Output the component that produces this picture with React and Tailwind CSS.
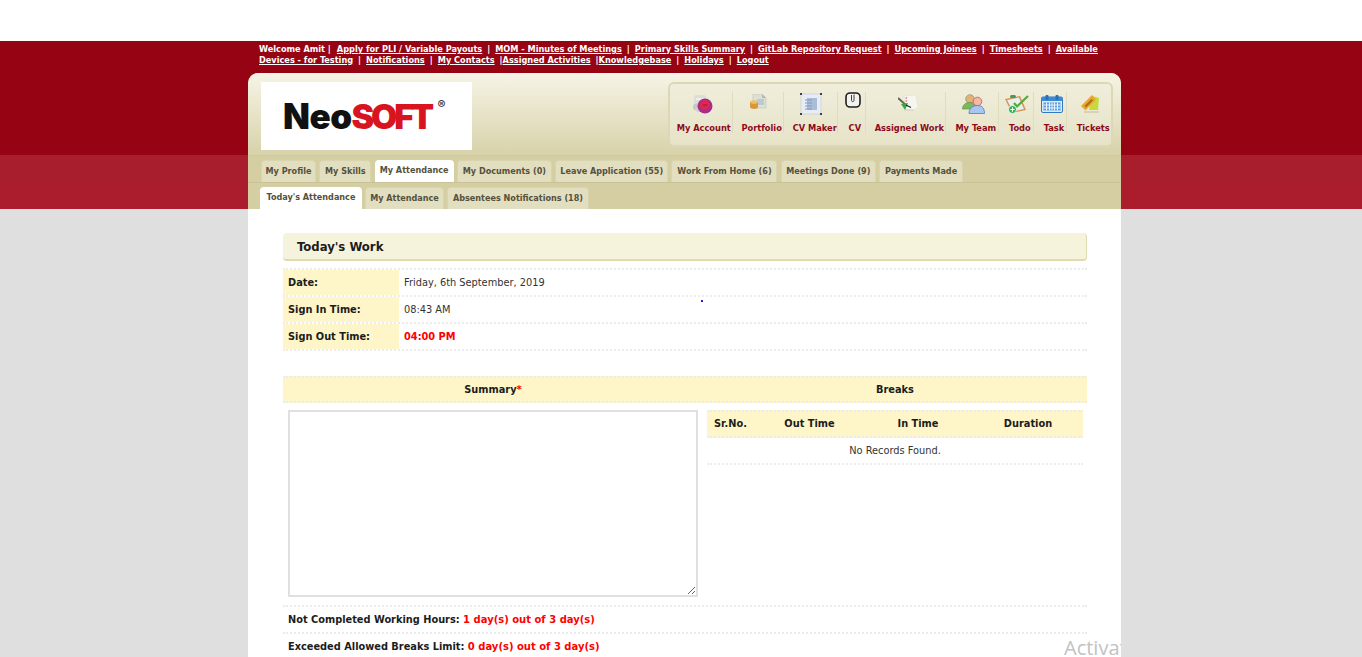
import React from 'react'

const sans = "font-['DejaVu_Sans',Verdana,sans-serif]"
const cond = "font-['DejaVu_Sans_Condensed','DejaVu_Sans',sans-serif]"

const IconAccount = () => (
  <svg className="ml-[4px] blur-[0.4px]" width="20" height="19" viewBox="0 0 20 19">
    <rect x="1" y="0" width="12" height="14" rx="2" fill="#deded8" />
    <rect x="3" y="3" width="8" height="2" fill="#efefe8" />
    <circle cx="3.500" cy="12" r="3.500" fill="#c8c8c2" />
    <path d="M2 13h8v4H4z" fill="#d2d2cc" />
    <circle cx="12" cy="11" r="7.500" fill="#a62d8c" />
    <circle cx="12" cy="10" r="5" fill="#dc2850" />
    <path d="M10 10h4" stroke="#9a1438" strokeWidth="1" />
  </svg>
)
const IconPortfolio = () => (
  <svg className="mb-[6px] blur-[0.4px]" width="17" height="15" viewBox="0 0 17 15">
    <path d="M3 0h9l4 4v10H3z" fill="#dde0d4" stroke="#bcc0ae" strokeWidth="0.600" />
    <path d="M12 0v4h4z" fill="#b6baa8" />
    <rect x="7" y="5" width="7" height="6" fill="#bccad0" />
    <path d="M0 8h8v5c0 1-2 2-4 2s-4-1-4-2z" fill="#d8983a" />
    <ellipse cx="4" cy="8" rx="4" ry="1.800" fill="#efbe66" />
  </svg>
)
const IconCvMaker = () => (
  <svg className="blur-[0.3px]" width="22" height="22" viewBox="0 0 22 22">
    <rect x="1" y="1" width="20" height="20" fill="#e8ecf4" stroke="#c4c8d0" strokeWidth="0.600" />
    <rect x="7" y="5" width="10" height="12" fill="#a9bdd6" />
    <path d="M5 7h7M5 10h7M5 13h7M5 16h7" stroke="#7d9ac0" strokeWidth="1" />
    <path d="M0 0h2v2H0zM20 0h2v2h-2zM0 20h2v2H0zM20 20h2v2h-2z" fill="#3a3f4c" />
  </svg>
)
const IconCv = () => (
  <svg className="ml-[2px] mb-[8px] blur-[0.3px]" width="16" height="16" viewBox="0 0 16 16">
    <rect x="1" y="1" width="14" height="14" rx="4" fill="#f2f2ee" stroke="#1e1e1e" strokeWidth="1.600" />
    <path d="M6.500 3v5.500c0 1.500 2.500 1.500 2.500 0V2.500" fill="none" stroke="#444" strokeWidth="1" />
  </svg>
)
const IconAssigned = () => (
  <svg className="ml-[6px] blur-[0.3px]" width="20" height="18" viewBox="0 0 20 18">
    <path d="M6 1l12-1 2 12-5 4-8-2z" fill="#f6f6f0" stroke="#dcdcd2" strokeWidth="0.500" />
    <path d="M7.500 3h1.500M7.500 6h1.500" stroke="#d4443c" strokeWidth="1.200" />
    <path d="M0 3l9 8" stroke="#60624f" strokeWidth="1.800" />
    <path d="M3 9l7-1-3 7z" fill="#36a848" />
    <path d="M8 10l5 2.500" stroke="#222" strokeWidth="1.200" />
    <path d="M6 15h10" stroke="#cfcfb8" strokeWidth="1" />
  </svg>
)
const IconTeam = () => (
  <svg className="ml-[4px] blur-[0.3px]" width="23" height="20" viewBox="0 0 23 20">
    <circle cx="8" cy="5" r="4.300" fill="#e6b07a" stroke="#8aa45a" strokeWidth="0.800" />
    <path d="M0.500 15c0-4 3-6.500 7-6.500s6 2.500 6 6.500z" fill="#7cb85e" stroke="#5a8a40" strokeWidth="0.600" />
    <circle cx="15.500" cy="7.500" r="4.300" fill="#f2b8a8" stroke="#c85a50" strokeWidth="0.800" />
    <path d="M7 19.500c0-5 3.500-8 8.500-8s7 3 7 8z" fill="#a9c6ee" stroke="#4f7cc4" strokeWidth="0.800" />
  </svg>
)
const IconTodo = () => (
  <svg className="ml-[2px] blur-[0.3px]" width="24" height="19" viewBox="0 0 24 19">
    <path d="M0 4l15-3 6 14-14 3z" fill="#d98f58" />
    <path d="M2 5l12-2.500 5 11.500-11 2.500z" fill="#e6f0ec" />
    <rect x="5" y="0" width="6" height="3" rx="1.500" fill="#469a58" />
    <path d="M9 8l3 3.500L23 1" fill="none" stroke="#56a83a" strokeWidth="2.200" />
    <circle cx="7.500" cy="14.500" r="4" fill="#34a84a" stroke="#fff" strokeWidth="0.800" />
    <path d="M7.500 12.300v4.400M5.300 14.500h4.400" stroke="#fff" strokeWidth="1.200" />
  </svg>
)
const IconTask = () => (
  <svg className="ml-[4px] blur-[0.3px]" width="22" height="18" viewBox="0 0 22 18">
    <rect x="0.500" y="2" width="21" height="15.500" rx="1.500" fill="#dbeafa" stroke="#2f78c4" />
    <rect x="0.500" y="2" width="21" height="4" rx="1" fill="#3d8ad6" />
    <rect x="4.500" y="0" width="3" height="5" rx="1" fill="#2a70ba" />
    <rect x="14.500" y="0" width="3" height="5" rx="1" fill="#2a70ba" />
    <path d="M2.500 7.500h17v8h-17z" fill="#5b9fe0" />
    <path d="M5.500 7.500v8M8.500 7.500v8M11 7.500v8M13.500 7.500v8M16.500 7.500v8M2.500 10h17M2.500 13h17" stroke="#e8f2fb" strokeWidth="1" />
  </svg>
)
const IconTickets = () => (
  <svg className="ml-[2px] blur-[0.3px]" width="19" height="18" viewBox="0 0 19 18">
    <path d="M11 1l7 2-1 12H8z" fill="#c4da3e" />
    <path d="M0 11L11 0l4 4.500L4.500 15.500z" fill="#eda52c" />
    <path d="M3.500 11L10.500 4l1.500 1.500L5 12.500z" fill="#a8701a" />
    <path d="M3 17h15" stroke="#cfcba8" strokeWidth="1.500" />
  </svg>
)

const navItems = [
  { label: 'My Account', icon: <IconAccount />, w: 'w-[64px]', text: 'pl-[5px]' },
  { label: 'Portfolio', icon: <IconPortfolio />, w: 'w-[51px]', text: 'pl-[7px]' },
  { label: 'CV Maker', icon: <IconCvMaker />, w: 'w-[55px]', text: 'pl-[8px]' },
  { label: 'CV', icon: <IconCv />, w: 'w-[28px]', text: 'pl-[6px]' },
  { label: 'Assigned Work', icon: <IconAssigned />, w: 'w-[80px]', text: 'pl-[8px]' },
  { label: 'My Team', icon: <IconTeam />, w: 'w-[54px]', text: 'pl-[8px]' },
  { label: 'Todo', icon: <IconTodo />, w: 'w-[35px]', text: 'pl-[8px]' },
  { label: 'Task', icon: <IconTask />, w: 'w-[34px]', text: 'pl-[8px]' },
  { label: 'Tickets', icon: <IconTickets />, w: 'w-[44px]', text: 'pl-[8px]' },
]

const tabsTop = [
  ['My Profile', 'w-[55px]'],
  ['My Skills', 'w-[52px]'],
  ['My Attendance', 'w-[79px]', true],
  ['My Documents (0)', 'w-[95px]'],
  ['Leave Application (55)', 'w-[113px]'],
  ['Work From Home (6)', 'w-[106px]'],
  ['Meetings Done (9)', 'w-[95px]'],
  ['Payments Made', 'w-[84px]'],
]
const tabsSub = [
  ["Today's Attendance", 'w-[102px]', true],
  ['My Attendance', 'w-[79px]'],
  ['Absentees Notifications (18)', 'w-[142px]'],
]

function Tab({ label, w, active }) {
  return (
    <div className={`${w} h-[22px] flex items-center justify-center rounded-t-[4px] text-[9px] font-bold whitespace-nowrap text-[#55513c] ${cond} ${active ? 'bg-white' : 'bg-[#e2dec0] border border-b-0 border-[#d9d4ae]'}`}>
      {label}
    </div>
  )
}

function Sep() {
  return <span className="mx-[5px]">|</span>
}

function InfoRow({ label, children }) {
  return (
    <div className="flex h-[27px] border-b-2 border-dotted border-[#ececec]">
      <div className="w-[116px] pl-[5px] pt-[1px] flex items-center bg-[#fef6c8] font-bold text-[#1c1c1c]">{label}</div>
      <div className="pl-[5px] pt-[1px] flex items-center text-[#333]">{children}</div>
    </div>
  )
}

export default function App() {
  return (
    <div className={`h-screen overflow-hidden bg-[#dfdfdf] text-[9.8px] ${sans}`}>
      <div className="h-[41px] bg-white" />

      <div className="h-[168px] bg-[linear-gradient(to_bottom,#960413_0,#960413_114px,#a81e2c_114px,#a81e2c_141px,#ab1c2c_141px,#ab1c2c_168px)]">
        <div className="w-[873px] ml-[248px]">
          <div className={`h-[32px] pl-[11px] pt-[3px] w-[860px] text-white font-bold text-[9.1px] leading-[11px] ${cond}`}>
            Welcome Amit |<a className="underline ml-[6px]">Apply for PLI / Variable Payouts</a><Sep />
            <a className="underline">MOM - Minutes of Meetings</a><Sep />
            <a className="underline">Primary Skills Summary</a><Sep />
            <a className="underline">GitLab Repository Request</a><Sep />
            <a className="underline">Upcoming Joinees</a><Sep />
            <a className="underline">Timesheets</a><Sep />
            <a className="underline">Available Devices - for Testing</a><Sep />
            <a className="underline">Notifications</a><Sep />
            <a className="underline">My Contacts</a><span className="ml-[5px]">|</span>
            <a className="underline">Assigned Activities</a><span className="ml-[5px]">|</span>
            <a className="underline">Knowledgebase</a><Sep />
            <a className="underline">Holidays</a><Sep />
            <a className="underline">Logout</a>
          </div>

          <div className="h-[136px] rounded-t-[10px] overflow-hidden bg-[#d4cea2]">
            <div className="h-[82px] px-[13px] pt-[9px] flex justify-between bg-[linear-gradient(to_bottom,#f6f4e6,#d8d2aa)]">
              <div className="w-[211px] h-[68px] bg-white flex items-center pl-[22px] pt-[1px]">
                <div className="relative font-['Inter',sans-serif] font-black text-[35px] leading-none tracking-[-0.5px] text-[#111]">
                  Neo<span className="text-[34px] text-[#d7141f] tracking-[-3.2px]">SOFT</span>
                  <span className="absolute -right-[14px] top-[0px] text-[12px] font-bold text-[#3a3a3a]">®</span>
                </div>
              </div>
              <div className="w-[445px] h-[65px] -mr-[5px] rounded-[6px] border-2 border-[#dcd8b4] bg-[linear-gradient(to_bottom,#f0eedb,#e6e3c8)] flex items-start pt-[8px]">
                {navItems.map((item, i) => (
                  <div key={item.label} className={`${item.w} h-[41px] flex flex-col items-center justify-between ${i < navItems.length - 1 ? 'border-r border-[#e0dcc0]' : ''}`}>
                    <div className="h-[24px] flex items-center justify-center">{item.icon}</div>
                    <div className={`${item.text} text-[9.2px] font-bold whitespace-nowrap text-[#8c0a1a] leading-[11px] ${cond}`}>{item.label}</div>
                  </div>
                ))}
              </div>
            </div>
            <div className="h-[27px] pl-[13px] pt-[4px] flex gap-[3.3px] border-t border-[#cfc99e]">
              {tabsTop.map(([label, w, active]) => (
                <Tab key={label} label={label} w={w} active={active} />
              ))}
            </div>
            <div className="h-[27px] pl-[12px] pt-[4px] flex gap-[3px] border-t border-[#c8c296]">
              {tabsSub.map(([label, w, active]) => (
                <Tab key={label} label={label} w={w} active={active} />
              ))}
            </div>
          </div>
        </div>
      </div>

      <div className="relative w-[873px] ml-[248px] h-[448px] overflow-hidden bg-white pl-[35px] pr-[34px] pt-[24px]">
        <div className={`h-[28px] pl-[14px] pt-[1px] flex items-center rounded-[4px] bg-[#f5f3dc] border-b-2 border-r border-[#dedbb0] text-[13px] font-bold text-[#1c1c1c] ${cond}`}>
          Today's Work
        </div>

        <div className="relative mt-[7px] border-t-2 border-dotted border-[#ececec]">
          <InfoRow label="Date:">Friday, 6th September, 2019</InfoRow>
          <InfoRow label="Sign In Time:">08:43 AM</InfoRow>
          <InfoRow label="Sign Out Time:"><span className="font-bold text-[#ff0000]">04:00 PM</span></InfoRow>
          <div className="absolute left-[418px] top-[30px] w-[2px] h-[2px] bg-[#2222cc]" />
        </div>

        <div className="mt-[25px] flex h-[27px] pt-[2px] bg-[#fef6c8] font-bold text-[#1c1c1c] border-y-2 border-dotted border-[#ececec]">
          <div className="w-[420px] flex items-center justify-center">Summary<span className="text-[#ff0000]">*</span></div>
          <div className="flex-1 flex items-center justify-center">Breaks</div>
        </div>

        <div className="flex h-[204px] border-b-2 border-dotted border-[#ececec]">
          <div className="w-[424px] pl-[5px] pt-[7px]">
            <textarea className="block w-[410px] h-[187px] border-2 border-[#e0e0e0] bg-white" />
          </div>
          <div className="w-[376px] pt-[7px]">
            <div className="flex h-[28px] pt-[1px] bg-[#fef6c8] font-bold text-[#1c1c1c] border-y-2 border-dotted border-[#ececec]">
              <div className="w-[49px] pl-[7px] flex items-center">Sr.No.</div>
              <div className="w-[107px] flex items-center justify-center">Out Time</div>
              <div className="w-[110px] flex items-center justify-center">In Time</div>
              <div className="w-[110px] flex items-center justify-center">Duration</div>
            </div>
            <div className="h-[27px] pt-[2px] flex items-center justify-center text-[#333] border-b-2 border-dotted border-[#ececec]">
              No Records Found.
            </div>
          </div>
        </div>

        <div className="h-[27px] pl-[5px] pt-[1px] flex items-center font-bold text-[#1c1c1c] border-b-2 border-dotted border-[#ececec]">
          <div>Not Completed Working Hours: <span className="text-[#ff0000] text-[10px]">1 day(s) out of 3 day(s)</span></div>
        </div>
        <div className="h-[27px] pl-[5px] pt-[1px] flex items-center font-bold text-[#1c1c1c] border-b-2 border-dotted border-[#ececec]">
          <div>Exceeded Allowed Breaks Limit: <span className="text-[#ff0000] text-[10px]">0 day(s) out of 3 day(s)</span></div>
        </div>

        <div className="absolute left-[816px] bottom-[-4px] font-['Open_Sans',sans-serif] text-[20px] leading-[26px] text-[#c2c2c2] whitespace-nowrap">
          Activate
        </div>
      </div>
    </div>
  )
}
